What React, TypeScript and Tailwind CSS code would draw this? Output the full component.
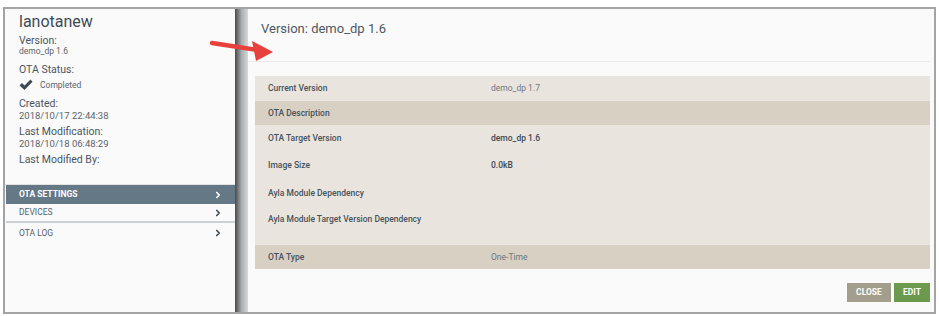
import { ChevronRight } from "lucide-react";

const font = { fontFamily: "Roboto, 'Liberation Sans', sans-serif" };

function Check() {
  return (
    <svg width="14" height="12" viewBox="0 0 14 12" className="mr-[7px]">
      <path d="M0.5 6.5 L3 4 L5.5 6.5 L11.5 0.5 L13.5 2.8 L5.5 11 Z" fill="#3d4a55" />
    </svg>
  );
}

function Chevron({ white }: { white?: boolean }) {
  return (
    <ChevronRight
      className={white ? "w-[10px] h-[10px] text-white" : "w-[10px] h-[10px] text-[#3f4c57]"}
      strokeWidth={4}
    />
  );
}

function Row({ label, value, dark, strong, h = "h-[24px]" }: { label: string; value?: string; dark?: boolean; strong?: boolean; h?: string }) {
  return (
    <div className={`flex items-center ${h} ${dark ? "bg-[#d9d0c4]" : ""}`}>
      <div className="w-[236px] pl-[13px] text-[8.5px] font-medium text-[#46525c]">{label}</div>
      {value && (
        <div className={`text-[8.5px] ${strong ? "font-medium text-[#3c4852]" : "text-[#6c767e]"}`}>{value}</div>
      )}
    </div>
  );
}

export default function App() {
  return (
    <div className="w-[939px] h-[316px] bg-white pt-[7px] pl-[3px] relative" style={font}>
      <div className="w-[933px] h-[307px] border-2 border-[#a4a4a4] flex bg-[#fafafa]">
        {/* Sidebar */}
        <aside className="w-[230px] flex flex-col text-[#4a555f]">
          <div className="pl-[14px] pt-[2px]">
            <div className="text-[16px] leading-[22px] text-[#3e4a54]">lanotanew</div>
            <div className="text-[10.5px] leading-[12px] mt-[2px]">Version:</div>
            <div className="text-[8.5px] leading-[9px] text-[#5a646c]">demo_dp 1.6</div>
            <div className="text-[10.5px] leading-[12px] mt-[8px]">OTA Status:</div>
            <div className="flex items-center h-[14px] mt-[2px] text-[8.5px] text-[#5a646c]">
              <Check />
              Completed
            </div>
            <div className="text-[10.5px] leading-[12px] mt-[6px]">Created:</div>
            <div className="text-[9.5px] leading-[11px] text-[#5a646c]">2018/10/17 22:44:38</div>
            <div className="text-[10.5px] leading-[12px] mt-[5px]">Last Modification:</div>
            <div className="text-[9.5px] leading-[11px] text-[#5a646c]">2018/10/18 06:48:29</div>
            <div className="text-[10.5px] leading-[12px] mt-[5px]">Last Modified By:</div>
          </div>
          <nav className="mt-[18px] border-t border-[#e2e2e2] pl-px">
            <div className="flex items-center justify-between h-[19px] bg-[#657886] pl-[13px] pr-[12px] text-[8.5px] font-bold text-white">
              OTA SETTINGS
              <Chevron white />
            </div>
            <div className="flex items-center justify-between h-[19px] pl-[13px] pr-[12px] text-[8.5px] text-[#55606a] border-b-2 border-[#cdd0d3]">
              DEVICES
              <Chevron />
            </div>
            <div className="flex items-center justify-between h-[20px] pl-[13px] pr-[12px] text-[8.5px] text-[#55606a]">
              OTA LOG
              <Chevron />
            </div>
          </nav>
        </aside>

        {/* Shadow divider */}
        <div className="w-[13px] bg-gradient-to-r from-[#4a4a4a] via-[#a9adb0] to-[#d6dadd]" />

        {/* Main */}
        <main className="flex-1 flex flex-col pr-[4px]">
          <div className="h-[53px] border-b border-[#ebebeb] pl-[13px] pt-[10px] text-[13px] text-[#4d5862]">
            Version: demo_dp 1.6
          </div>
          <div className="mt-[14px] ml-[7px] bg-[#e9e5de]">
            <Row label="Current Version" value="demo_dp 1.7" h="h-[25px]" />
            <Row label="OTA Description" dark />
            <div className="pb-[14px]">
              <Row label="OTA Target Version" value="demo_dp 1.6" strong h="h-[26px]" />
              <Row label="Image Size" value="0.0kB" strong h="h-[28px]" />
              <Row label="Ayla Module Dependency" h="h-[28px]" />
              <Row label="Ayla Module Target Version Dependency" h="h-[24px]" />
            </div>
            <Row label="OTA Type" value="One-Time" dark />
          </div>
          <div className="flex justify-end gap-[3px] mt-[14px]">
            <button className="w-[44px] h-[19px] bg-[#a39e8b] text-white text-[8.5px] font-bold">CLOSE</button>
            <button className="w-[36px] h-[19px] bg-[#6b9a4f] text-white text-[8.5px] font-bold">EDIT</button>
          </div>
        </main>
      </div>

      {/* Red annotation arrow */}
      <svg className="absolute left-[205px] top-[36px]" width="75" height="32" viewBox="0 0 75 32">
        <line x1="7" y1="7" x2="52" y2="14" stroke="#e8413c" strokeWidth="4.5" strokeLinecap="round" />
        <polygon points="47,5 68,16 51,25" fill="#e8413c" />
      </svg>
    </div>
  );
}
